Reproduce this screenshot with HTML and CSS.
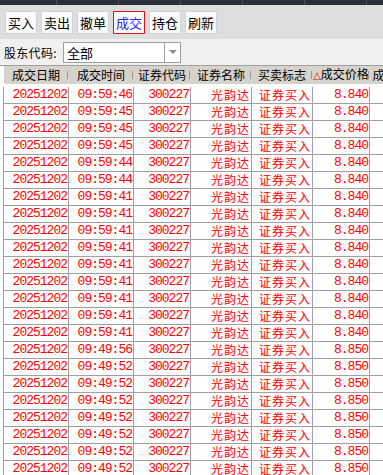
FILE: index.html
```html
<!DOCTYPE html>
<html lang="zh-CN">
  <head>
    <meta charset="UTF-8" />
    <title>成交查询</title>
    <link rel="stylesheet" href="styles.css">
  </head>
  <body>
    <div id="top-strip">
      <span></span><span></span><span></span><span></span><span></span><span></span>
    </div>

    <div id="toolbar">
      <button class="tool-btn">买入</button>
      <button class="tool-btn">卖出</button>
      <button class="tool-btn">撤单</button>
      <button class="tool-btn active">成交</button>
      <button class="tool-btn">持仓</button>
      <button class="tool-btn">刷新</button>
    </div>

    <div id="filter-bar">
      <label class="filter-label">股东代码:</label>
      <div class="select-box">
        <span class="select-value">全部</span>
        <span class="select-arrow"></span>
      </div>
    </div>

    <div id="grid">
      <table>
        <colgroup>
          <col class="c-date" /><col class="c-time" /><col class="c-code" /><col class="c-name" /><col class="c-flag" /><col class="c-price" /><col class="c-more" />
        </colgroup>
        <thead>
          <tr>
            <th>成交日期</th>
            <th>成交时间</th>
            <th>证券代码</th>
            <th>证券名称</th>
            <th>买卖标志</th>
            <th><span class="sort-mark">△</span>成交价格</th>
            <th class="left">成交数量</th>
          </tr>
        </thead>
        <tbody>
          <tr><td class="num">20251202</td><td class="num">09:59:46</td><td class="num">300227</td><td>光韵达</td><td>证券买入</td><td class="num">8.840</td><td></td></tr>
          <tr><td class="num">20251202</td><td class="num">09:59:45</td><td class="num">300227</td><td>光韵达</td><td>证券买入</td><td class="num">8.840</td><td></td></tr>
          <tr><td class="num">20251202</td><td class="num">09:59:45</td><td class="num">300227</td><td>光韵达</td><td>证券买入</td><td class="num">8.840</td><td></td></tr>
          <tr><td class="num">20251202</td><td class="num">09:59:45</td><td class="num">300227</td><td>光韵达</td><td>证券买入</td><td class="num">8.840</td><td></td></tr>
          <tr><td class="num">20251202</td><td class="num">09:59:44</td><td class="num">300227</td><td>光韵达</td><td>证券买入</td><td class="num">8.840</td><td></td></tr>
          <tr><td class="num">20251202</td><td class="num">09:59:44</td><td class="num">300227</td><td>光韵达</td><td>证券买入</td><td class="num">8.840</td><td></td></tr>
          <tr><td class="num">20251202</td><td class="num">09:59:41</td><td class="num">300227</td><td>光韵达</td><td>证券买入</td><td class="num">8.840</td><td></td></tr>
          <tr><td class="num">20251202</td><td class="num">09:59:41</td><td class="num">300227</td><td>光韵达</td><td>证券买入</td><td class="num">8.840</td><td></td></tr>
          <tr><td class="num">20251202</td><td class="num">09:59:41</td><td class="num">300227</td><td>光韵达</td><td>证券买入</td><td class="num">8.840</td><td></td></tr>
          <tr><td class="num">20251202</td><td class="num">09:59:41</td><td class="num">300227</td><td>光韵达</td><td>证券买入</td><td class="num">8.840</td><td></td></tr>
          <tr><td class="num">20251202</td><td class="num">09:59:41</td><td class="num">300227</td><td>光韵达</td><td>证券买入</td><td class="num">8.840</td><td></td></tr>
          <tr><td class="num">20251202</td><td class="num">09:59:41</td><td class="num">300227</td><td>光韵达</td><td>证券买入</td><td class="num">8.840</td><td></td></tr>
          <tr><td class="num">20251202</td><td class="num">09:59:41</td><td class="num">300227</td><td>光韵达</td><td>证券买入</td><td class="num">8.840</td><td></td></tr>
          <tr><td class="num">20251202</td><td class="num">09:59:41</td><td class="num">300227</td><td>光韵达</td><td>证券买入</td><td class="num">8.840</td><td></td></tr>
          <tr><td class="num">20251202</td><td class="num">09:59:41</td><td class="num">300227</td><td>光韵达</td><td>证券买入</td><td class="num">8.840</td><td></td></tr>
          <tr><td class="num">20251202</td><td class="num">09:49:56</td><td class="num">300227</td><td>光韵达</td><td>证券买入</td><td class="num">8.850</td><td></td></tr>
          <tr><td class="num">20251202</td><td class="num">09:49:52</td><td class="num">300227</td><td>光韵达</td><td>证券买入</td><td class="num">8.850</td><td></td></tr>
          <tr><td class="num">20251202</td><td class="num">09:49:52</td><td class="num">300227</td><td>光韵达</td><td>证券买入</td><td class="num">8.850</td><td></td></tr>
          <tr><td class="num">20251202</td><td class="num">09:49:52</td><td class="num">300227</td><td>光韵达</td><td>证券买入</td><td class="num">8.850</td><td></td></tr>
          <tr><td class="num">20251202</td><td class="num">09:49:52</td><td class="num">300227</td><td>光韵达</td><td>证券买入</td><td class="num">8.850</td><td></td></tr>
          <tr><td class="num">20251202</td><td class="num">09:49:52</td><td class="num">300227</td><td>光韵达</td><td>证券买入</td><td class="num">8.850</td><td></td></tr>
          <tr><td class="num">20251202</td><td class="num">09:49:52</td><td class="num">300227</td><td>光韵达</td><td>证券买入</td><td class="num">8.850</td><td></td></tr>
          <tr><td class="num">20251202</td><td class="num">09:49:52</td><td class="num">300227</td><td>光韵达</td><td>证券买入</td><td class="num">8.850</td><td></td></tr>
        </tbody>
      </table>
    </div>
  </body>
</html>
```

FILE: styles.css
```css
body {
  margin: 0;
  width: 383px;
  height: 475px;
  overflow: hidden;
  background: #ffffff;
  font-family: "Noto Sans CJK SC", sans-serif;
  font-size: 13px;
  color: #000000;
}

#top-strip {
  height: 5px;
  background: #2b2e3b;
  display: flex;
}
#top-strip span {
  width: 61px;
  border-right: 1px solid #4b4f60;
}
#top-strip span:first-child {
  width: 56px;
}

#toolbar {
  height: 34px;
  box-sizing: border-box;
  padding: 6px 5px 0;
  background: #dedede;
  display: flex;
  gap: 4px;
  align-items: flex-start;
}
.tool-btn {
  width: 32px;
  height: 23px;
  padding: 0;
  background: #fbfbfb;
  border: 1px solid #d2d2d2;
  font-family: "Noto Sans CJK SC", sans-serif;
  font-size: 13px;
  line-height: 21px;
  color: #000000;
}
.tool-btn.active {
  border-color: #e0141e;
  color: #2a2af0;
}

#filter-bar {
  height: 26px;
  background: #f0f0f0;
  display: flex;
  align-items: center;
  border-bottom: 1px solid #a0a0a0;
}
.filter-label {
  width: 63px;
  padding-left: 4px;
  box-sizing: border-box;
  font-size: 12px;
  letter-spacing: 0.3px;
  white-space: nowrap;
}
.select-box {
  width: 118px;
  height: 21px;
  box-sizing: border-box;
  border: 1px solid #a0a0a0;
  background: #ffffff;
  display: flex;
  align-items: center;
}
.select-value {
  flex: 1;
  padding-left: 3px;
  line-height: 19px;
}
.select-arrow {
  width: 15px;
  height: 19px;
  border-left: 1px solid #a0a0a0;
  display: flex;
  align-items: center;
  justify-content: center;
}
.select-arrow::after {
  content: "";
  border-left: 4px solid transparent;
  border-right: 4px solid transparent;
  border-top: 4px solid #8a8a8a;
}

#grid {
  padding-left: 3px;
  width: 380px;
  overflow: hidden;
}
table {
  border-collapse: collapse;
  table-layout: fixed;
  width: 440px;
}
col.c-date { width: 65px; }
col.c-time { width: 65px; }
col.c-code { width: 57px; }
col.c-name { width: 61px; }
col.c-flag { width: 61px; }
col.c-price { width: 57px; }
col.c-more { width: 74px; }

th {
  height: 17px;
  padding: 0;
  background: #d6d2cc;
  font-weight: normal;
  font-size: 12px;
  line-height: 16px;
  text-align: center;
  white-space: nowrap;
  overflow: hidden;
  position: relative;
  border-bottom: 3px solid #ffffff;
}
th.left {
  text-align: left;
  padding-left: 3px;
}
th::after {
  content: "";
  position: absolute;
  right: 1px;
  top: 5px;
  height: 8px;
  border-right: 1px solid #9a9890;
}
.sort-mark {
  color: #e01010;
  font-family: "DejaVu Sans", sans-serif;
  font-size: 10px;
}

td {
  height: 16px;
  padding: 0 1px 0 0;
  border: 1px solid #a0a0a0;
  border-top: none;
  color: #ff0000;
  text-align: right;
  white-space: nowrap;
  overflow: hidden;
  font-size: 12px;
  letter-spacing: 1px;
  line-height: 16px;
}
td.num {
  font-family: "Liberation Mono", monospace;
  font-size: 13px;
  letter-spacing: -1px;
}
```
